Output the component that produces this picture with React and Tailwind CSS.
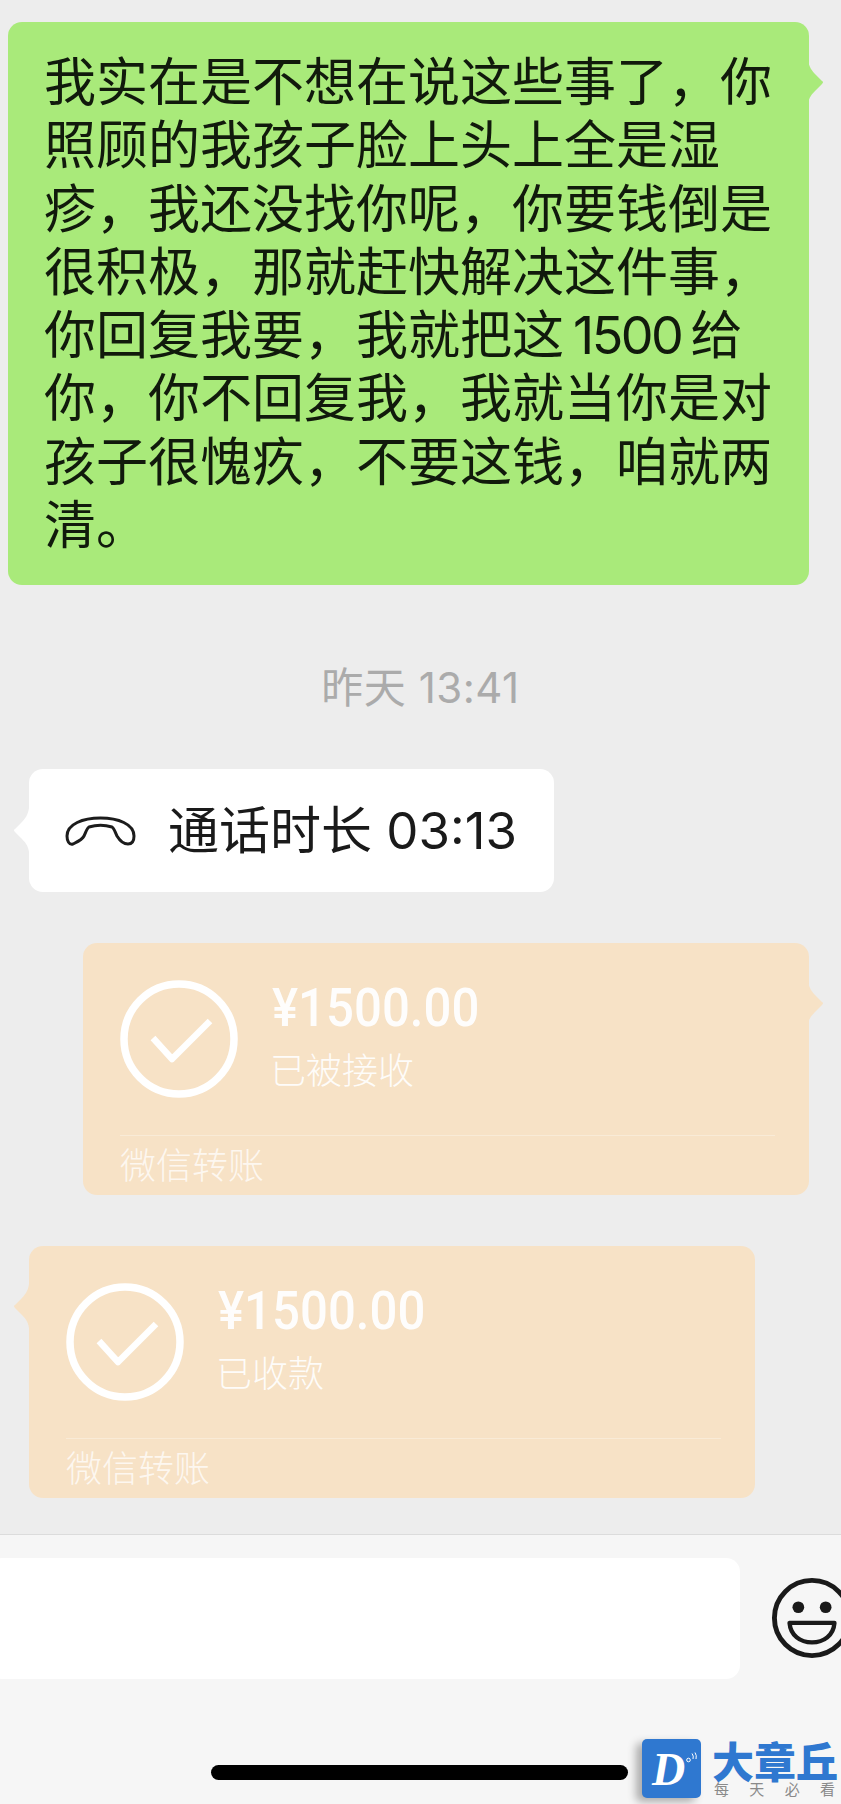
import React from 'react';

const COMMA = '\uFF0C';
const beforeAmount = ['我实在是不想在说这些事了', '你照顾的我孩子脸上头上全是湿疹', '我还没找你呢', '你要钱倒是很积极', '那就赶快解决这件事', '你回复我要', '我就把这'].join(COMMA);
const afterAmount = ['给你', '你不回复我', '我就当你是对孩子很愧疚', '不要这钱', '咱就两清。'].join(COMMA);

const Tail = ({ side, color, top }) => (
    <svg
        className={`absolute ${side === 'right' ? '-right-[15px]' : '-left-[16px]'} ${top} ${side === 'right' ? '' : '-scale-x-100'}`}
        width="16"
        height="44"
        viewBox="0 0 16 44"
    >
        <path d="M0 0 C1 7 4 11 8 15 L14 21 Q16 22 14 24 L8 30 C4 34 1 37 0 44 Z" fill={color} />
    </svg>
);

const Transfer = ({ status, side, className }) => (
    <div className={`relative w-[726px] h-[252px] rounded-[14px] bg-[#f7e2c6] ${className}`}>
        <Tail side={side} color="#f7e2c6" top="top-[38px]" />
        <div className="flex pt-[37px] pl-[37px]">
            <svg width="118" height="118" viewBox="0 0 118 118" fill="none" className="shrink-0">
                <circle cx="59" cy="59" r="55" stroke="#ffffff" strokeWidth="7.5" />
                <path d="M33 58 L52 79 L90 41" stroke="#ffffff" strokeWidth="6.5" strokeLinejoin="round" />
            </svg>
            <div className="ml-[34px] text-white">
                <div className="font-['Roboto',sans-serif] font-medium text-[54px] leading-[56px] opacity-95 origin-left scale-x-[0.91]">¥1500.00</div>
                <div className="mt-[10px] -ml-[2px] text-[36px] leading-[50px] font-light opacity-90">{status}</div>
            </div>
        </div>
        <div className="absolute left-[37px] right-[34px] top-[192px] border-t border-white/30" />
        <div className="absolute left-[37px] top-[198px] text-[36px] leading-[50px] font-light text-white/75">微信转账</div>
    </div>
);

export default function App() {
    return (
        <div lang="zh-CN" className="relative w-[841px] h-[1804px] overflow-hidden bg-[#ededed] font-['Inter','Noto_Sans_CJK_SC',sans-serif]">
            <main className="h-[1534px] pt-[22px]">
                <div className="flex justify-end pr-[32px] pl-[8px]">
                    <div className="relative w-full h-[563px] rounded-[14px] bg-[#a9ea7a] pl-[36px] pr-[37px] pt-[29px] text-[52px] leading-[63.3px] text-[#111a0c]">
                        <Tail side="right" color="#a9ea7a" top="top-[38px]" />
                        {beforeAmount}<span className="mx-[9px] tracking-[-2.5px]">1500</span>{afterAmount}
                    </div>
                </div>

                <div className="mt-[79px] text-center text-[42px] leading-[48px] tracking-[0.5px] text-[#ababab]">昨天 13:41</div>

                <div className="mt-[57px] pl-[29px]">
                    <div className="relative w-[525px] h-[123px] rounded-[14px] bg-white flex items-center pl-[36px]">
                        <Tail side="left" color="#ffffff" top="top-[39px]" />
                        <svg width="71" height="30" viewBox="0 0 71 30" fill="none" className="shrink-0">
                            <path
                                d="M2 20 C2 8 18 2 35.5 2 C53 2 69 8 69 20 C69 26 66 28 63 28 C59 28 55 25 52 20 C50 16 49 12 47 11 C40 9 31 9 24 11 C22 12 21 16 19 20 C17 24 12 26 8 28 C4 29 2 25 2 20 Z"
                                stroke="#1c1c1c"
                                strokeWidth="3"
                            />
                        </svg>
                        <span className="ml-[32px] text-[51px] leading-none text-[#1a1a1a] whitespace-nowrap">通话时长 03:13</span>
                    </div>
                </div>

                <div className="mt-[51px] flex justify-end pr-[32px]">
                    <Transfer status="已被接收" side="right" />
                </div>
                <div className="mt-[51px] pl-[29px]">
                    <Transfer status="已收款" side="left" />
                </div>
            </main>

            <footer className="h-[270px] bg-[#f6f6f6] border-t border-[#dcdcdc]">
                <div className="flex items-start pt-[23px]">
                    <div className="-ml-[12px] w-[752px] h-[121px] rounded-[14px] bg-white shrink-0" />
                    <svg width="82" height="82" viewBox="0 0 84 84" fill="none" className="ml-[31px] mt-[19px] shrink-0">
                        <circle cx="42" cy="42" r="38.5" stroke="#1a1a1a" strokeWidth="5" />
                        <circle cx="28" cy="31" r="6" fill="#1a1a1a" />
                        <circle cx="56" cy="31" r="6" fill="#1a1a1a" />
                        <path d="M19 47 H65 C64 60 54 67 42 67 C30 67 20 60 19 47 Z" stroke="#1a1a1a" strokeWidth="4.5" strokeLinejoin="round" />
                    </svg>
                </div>
                <div className="ml-[211px] mt-[86px] w-[417px] h-[15px] rounded-full bg-black" />
            </footer>

            {/* watermark */}
            <div className="absolute left-[642px] top-[1739px] flex">
                <div className="relative w-[59px] h-[59px] rounded-[5px] bg-[#2f78d0] shadow-[-6px_4px_8px_rgba(0,0,0,0.3)]">
                    <span className="absolute left-[10px] top-[11px] font-['Liberation_Serif',serif] font-bold italic text-[46px] leading-[40px] text-white">D</span>
                    <svg className="absolute left-[44px] top-[13px]" width="12" height="12" viewBox="0 0 12 12" fill="none" stroke="#ffffff" strokeWidth="1">
                        <circle cx="2.5" cy="8" r="1.8" />
                        <path d="M6 1.5 Q8 4 7 7 M9 0.5 Q11 3.5 10 7" />
                    </svg>
                </div>
                <div className="ml-[11px] font-['Noto_Sans_CJK_SC',sans-serif]">
                    <div className="text-[42px] leading-[41px] font-black text-[#2f78d0] whitespace-nowrap">大章丘</div>
                    <div className="mt-[1px] w-[125px] flex justify-between pl-[2px] pr-[2px] text-[15px] leading-[16px] text-[#8a8a8a]">
                        <span>每</span>
                        <span>天</span>
                        <span>必</span>
                        <span>看</span>
                    </div>
                </div>
            </div>
        </div>
    );
}
